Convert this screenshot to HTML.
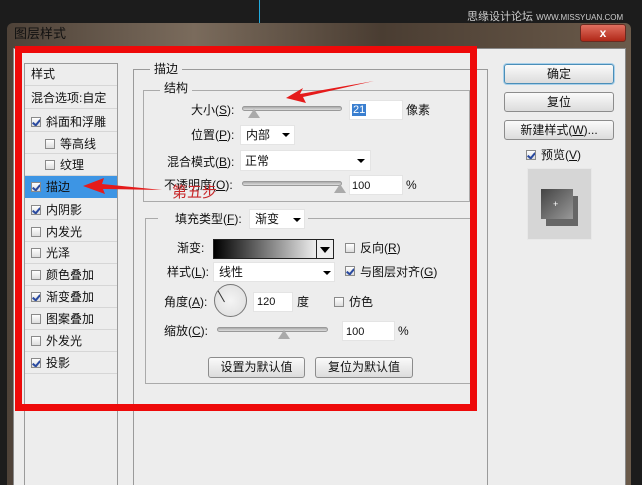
<!DOCTYPE html>
<html><head><meta charset="utf-8"><style>
*{margin:0;padding:0;box-sizing:border-box}
html,body{width:642px;height:485px;overflow:hidden}
body{background:#1c1c1c;font-family:"Liberation Sans","Noto Sans CJK SC",sans-serif;font-size:12px;color:#111;position:relative}
.a{position:absolute}
.t{position:absolute;white-space:nowrap;font-size:12px;line-height:14px}
.cb{position:absolute;width:10px;height:10px;border:1px solid #8a8a8a;background:linear-gradient(#fff,#ddd);overflow:hidden}
.cb.on::after{content:"";position:absolute;left:2px;top:0px;width:3px;height:6px;border-right:2px solid #2a4aa0;border-bottom:2px solid #2a4aa0;transform:rotate(40deg)}
.btn{position:absolute;border:1px solid #8c8c8c;border-radius:3px;background:linear-gradient(#fafafa,#dcdcdc);text-align:center;font-size:12px;line-height:18px}
.inp{position:absolute;background:#fff;border:1px solid #e4e4e4}
.sl{position:absolute;height:5px;border-radius:3px;background:linear-gradient(#aaa,#ddd);border:1px solid #999}
.th{position:absolute;width:0;height:0;border-left:6px solid transparent;border-right:6px solid transparent;border-bottom:9px solid #aaa}
.dd{position:absolute;width:0;height:0;border-left:4px solid transparent;border-right:4px solid transparent;border-top:4px solid #000}
.li{position:absolute;left:25px;width:92px;height:22px;border-bottom:1px solid #d6d6d6}
</style></head><body>
<div class="a" style="left:259px;top:0;width:1px;height:24px;background:#2ad"></div>
<div class="t" style="left:467px;top:10px;color:#ccc;font-size:11px">思缘设计论坛 <span style="font-size:8px">WWW.MISSYUAN.COM</span></div>
<div class="a" style="left:7px;top:23px;width:624px;height:462px;background:linear-gradient(90deg,#4e4238,#7a6b5c 30%,#4a3d32 60%,#6a5a4a);border-radius:6px 6px 0 0"></div>
<div class="t" style="left:14px;top:27px;font-size:13px">图层样式</div>
<div class="a" style="left:580px;top:24px;width:46px;height:18px;border-radius:3px;background:linear-gradient(#e07060,#b02818);border:1px solid #6a2a20;color:#fff;font-weight:bold;text-align:center;line-height:16px">x</div>
<div class="a" style="left:13px;top:48px;width:613px;height:437px;background:#ededed;border:1px solid #888;border-bottom:none"></div>
<div class="a" style="left:24px;top:63px;width:94px;height:422px;border:1px solid #9a9a9a;border-bottom:none;background:#ededed"></div>
<div class="li" style="top:64px"></div><div class="t" style="left:31px;top:67px">样式</div>
<div class="li" style="top:87px;height:22px"></div><div class="t" style="left:31px;top:91px">混合选项:自定</div>
<div class="cb on" style="left:31px;top:117px"></div><div class="t" style="left:46px;top:115px">斜面和浮雕</div><div class="li" style="top:110px"></div>
<div class="cb" style="left:45px;top:139px"></div><div class="t" style="left:60px;top:137px">等高线</div><div class="li" style="top:132px"></div>
<div class="cb" style="left:45px;top:160px"></div><div class="t" style="left:60px;top:158px">纹理</div><div class="li" style="top:154px"></div>
<div class="a" style="left:25px;top:176px;width:92px;height:22px;background:#3d95e4"></div>
<div class="cb on" style="left:31px;top:182px"></div><div class="t" style="left:46px;top:180px">描边</div>
<div class="cb on" style="left:31px;top:205px"></div><div class="t" style="left:46px;top:203px">内阴影</div><div class="li" style="top:198px"></div>
<div class="cb" style="left:31px;top:227px"></div><div class="t" style="left:46px;top:225px">内发光</div><div class="li" style="top:220px"></div>
<div class="cb" style="left:31px;top:248px"></div><div class="t" style="left:46px;top:246px">光泽</div><div class="li" style="top:242px"></div>
<div class="cb" style="left:31px;top:270px"></div><div class="t" style="left:46px;top:268px">颜色叠加</div><div class="li" style="top:264px"></div>
<div class="cb on" style="left:31px;top:292px"></div><div class="t" style="left:46px;top:290px">渐变叠加</div><div class="li" style="top:286px"></div>
<div class="cb" style="left:31px;top:314px"></div><div class="t" style="left:46px;top:312px">图案叠加</div><div class="li" style="top:308px"></div>
<div class="cb" style="left:31px;top:336px"></div><div class="t" style="left:46px;top:334px">外发光</div><div class="li" style="top:330px"></div>
<div class="cb on" style="left:31px;top:358px"></div><div class="t" style="left:46px;top:356px">投影</div><div class="li" style="top:352px"></div>
<div class="a" style="left:133px;top:69px;width:355px;height:416px;border:1px solid #9a9a9a;border-bottom:none"></div>
<div class="t" style="left:150px;top:62px;background:#ededed;padding:0 4px">描边</div>
<div class="a" style="left:143px;top:90px;width:327px;height:112px;border:1px solid #aaa"></div>
<div class="t" style="left:160px;top:81px;background:#ededed;padding:0 4px">结构</div>
<div class="t" style="left:191px;top:103px">大小(<u>S</u>):</div>
<div class="sl" style="left:242px;top:106px;width:100px"></div><div class="th" style="left:248px;top:109px"></div>
<div class="inp" style="left:349px;top:100px;width:54px;height:20px"></div><div class="a" style="left:352px;top:104px;background:#3a7fd0;color:#fff;font-size:11px;line-height:12px;padding:0 1px">21</div>
<div class="t" style="left:406px;top:103px">像素</div>
<div class="t" style="left:191px;top:128px">位置(<u>P</u>):</div>
<div class="inp" style="left:240px;top:125px;width:55px;height:20px"></div><div class="t" style="left:246px;top:128px">内部</div><div class="dd" style="left:282px;top:133px"></div>
<div class="t" style="left:167px;top:155px">混合模式(<u>B</u>):</div>
<div class="inp" style="left:240px;top:150px;width:131px;height:21px"></div><div class="t" style="left:245px;top:154px">正常</div><div class="dd" style="left:357px;top:159px"></div>
<div class="t" style="left:164px;top:178px">不透明度(<u>O</u>):</div>
<div class="sl" style="left:242px;top:181px;width:100px"></div><div class="th" style="left:334px;top:184px"></div>
<div class="inp" style="left:349px;top:175px;width:54px;height:20px"></div><div class="t" style="left:352px;top:179px;font-size:11px">100</div>
<div class="t" style="left:406px;top:178px">%</div>
<div class="a" style="left:145px;top:218px;width:326px;height:166px;border:1px solid #aaa"></div>
<div class="a" style="left:158px;top:212px;width:150px;height:18px;background:#ededed"></div>
<div class="t" style="left:175px;top:212px">填充类型(<u>F</u>):</div>
<div class="inp" style="left:249px;top:209px;width:56px;height:20px"></div><div class="t" style="left:255px;top:212px">渐变</div><div class="dd" style="left:293px;top:218px"></div>
<div class="t" style="left:177px;top:241px">渐变:</div>
<div class="a" style="left:213px;top:239px;width:121px;height:20px;border:1px solid #222;background:linear-gradient(90deg,#000,#fff 92%)"></div>
<div class="a" style="left:316px;top:240px;width:17px;height:18px;background:#eee;border-left:1px solid #222"></div><div class="dd" style="left:320px;top:247px;border-left-width:5px;border-right-width:5px;border-top-width:6px"></div>
<div class="cb" style="left:345px;top:243px"></div><div class="t" style="left:360px;top:241px">反向(<u>R</u>)</div>
<div class="t" style="left:167px;top:265px">样式(<u>L</u>):</div>
<div class="inp" style="left:213px;top:262px;width:122px;height:20px"></div><div class="t" style="left:219px;top:265px">线性</div><div class="dd" style="left:323px;top:271px"></div>
<div class="cb on" style="left:345px;top:266px"></div><div class="t" style="left:360px;top:265px">与图层对齐(<u>G</u>)</div>
<div class="t" style="left:164px;top:295px">角度(<u>A</u>):</div>
<div class="a" style="left:214px;top:284px;width:33px;height:33px;border-radius:50%;border:1px solid #777;background:radial-gradient(#f4f4f4,#ddd)"></div>
<div class="a" style="left:224px;top:289px;width:1px;height:13px;background:#333;transform:rotate(-30deg);transform-origin:bottom"></div>
<div class="inp" style="left:253px;top:292px;width:40px;height:20px"></div><div class="t" style="left:257px;top:295px;font-size:11px">120</div>
<div class="t" style="left:297px;top:295px">度</div>
<div class="cb" style="left:334px;top:297px"></div><div class="t" style="left:349px;top:295px">仿色</div>
<div class="t" style="left:164px;top:324px">缩放(<u>C</u>):</div>
<div class="sl" style="left:217px;top:327px;width:111px"></div><div class="th" style="left:278px;top:330px"></div>
<div class="inp" style="left:342px;top:321px;width:53px;height:20px"></div><div class="t" style="left:346px;top:325px;font-size:11px">100</div>
<div class="t" style="left:398px;top:324px">%</div>
<div class="btn" style="left:208px;top:357px;width:97px;height:21px">设置为默认值</div>
<div class="btn" style="left:315px;top:357px;width:98px;height:21px">复位为默认值</div>
<div class="btn" style="left:504px;top:64px;width:110px;height:20px;border-color:#4a8eb8;box-shadow:0 0 0 1px #a8d0ea">确定</div>
<div class="btn" style="left:504px;top:92px;width:110px;height:20px">复位</div>
<div class="btn" style="left:504px;top:120px;width:110px;height:20px">新建样式(<u>W</u>)...</div>
<div class="cb on" style="left:526px;top:150px"></div><div class="t" style="left:541px;top:148px">预览(<u>V</u>)</div>
<div class="a" style="left:527px;top:168px;width:65px;height:72px;background:#d6d6d6;border:1px solid #e8e8e8"></div>
<div class="a" style="left:546px;top:196px;width:32px;height:30px;background:#666"></div>
<div class="a" style="left:541px;top:189px;width:32px;height:30px;background:linear-gradient(135deg,#444,#999)"></div>
<div class="t" style="left:553px;top:197px;color:#fff;font-size:9px">+</div>
<div class="a" style="left:15px;top:46px;width:462px;height:365px;border:7px solid #ee0a0a"></div>
<svg class="a" style="left:0;top:0" width="642" height="485">
<polygon points="374,81 300,94 303,88 286,98 306,103 303,97" fill="#e51b1b"/>
<polygon points="162,190 102,184 104,178 83,186 105,194 103,189" fill="#e51b1b"/>
</svg>
<div class="t" style="left:172px;top:185px;color:#c8282a;font-size:15px;line-height:16px">第五步</div>
</body></html>
